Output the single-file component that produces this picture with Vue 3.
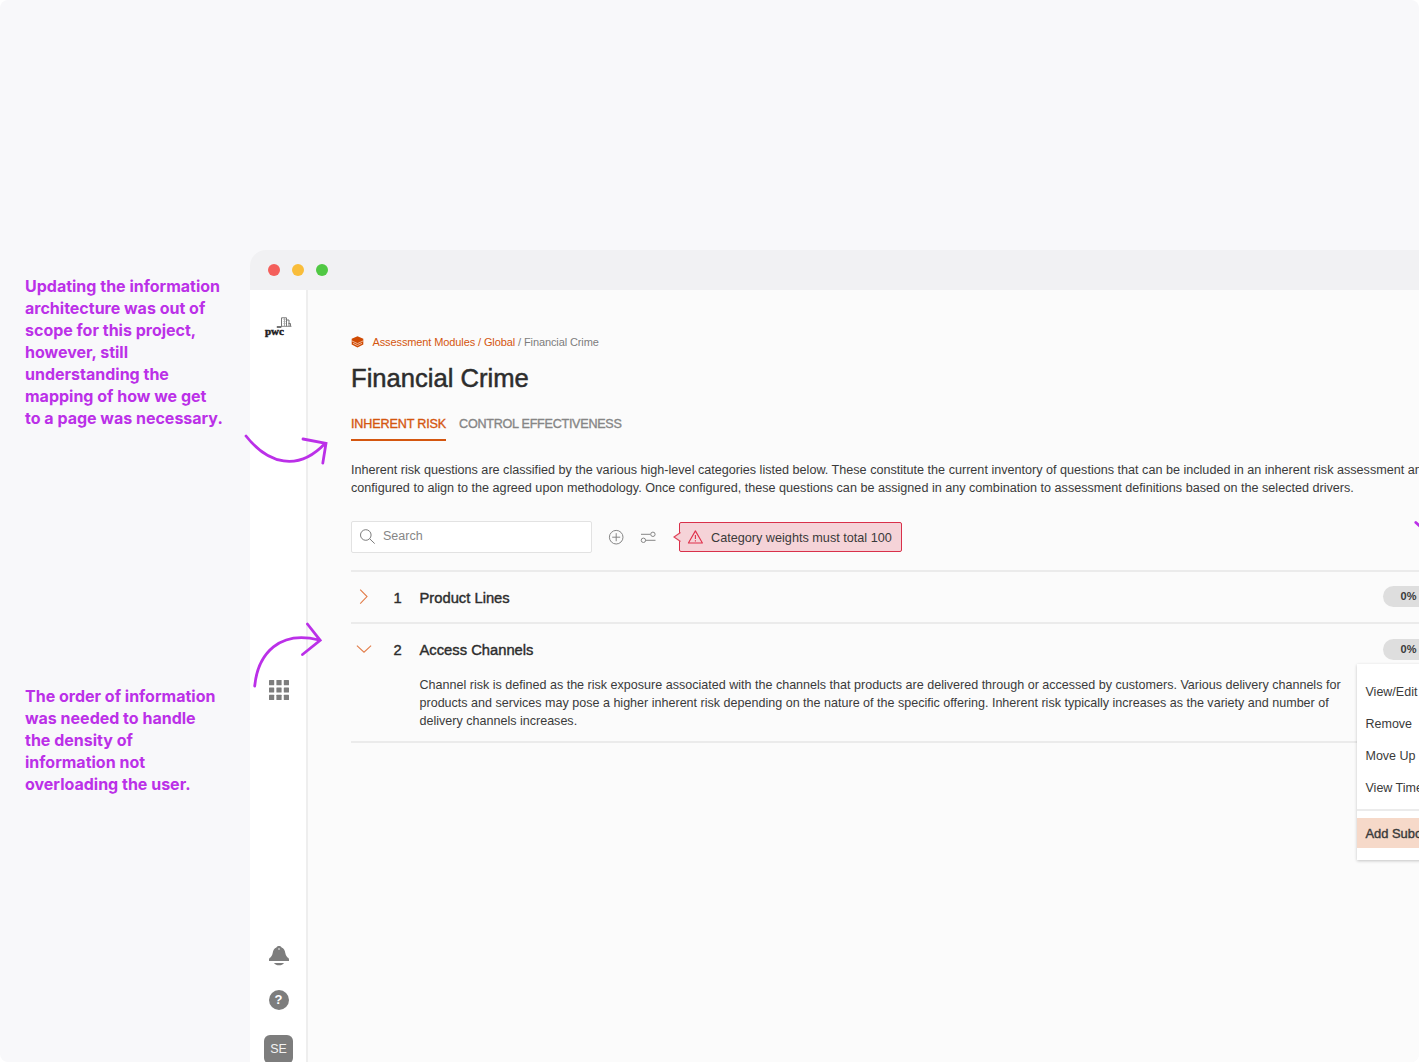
<script setup>
import { ref } from 'vue'

const notes = [
	['Updating the information', 'architecture was out of', 'scope for this project,', 'however, still', 'understanding the', 'mapping of how we get', 'to a page was necessary.'],
	['The order of information', 'was needed to handle', 'the density of', 'information not', 'overloading the user.'],
]

const tabs = ['INHERENT RISK', 'CONTROL EFFECTIVENESS']
const activeTab = ref(0)

const intro = [
	'Inherent risk questions are classified by the various high-level categories listed below. These constitute the current inventory of questions that can be included in an inherent risk assessment and',
	'configured to align to the agreed upon methodology. Once configured, these questions can be assigned in any combination to assessment definitions based on the selected drivers.',
]

const categories = ref([
	{ id: 1, name: 'Product Lines', weight: '0%', open: false, lines: [] },
	{
		id: 2,
		name: 'Access Channels',
		weight: '0%',
		open: true,
		lines: [
			'Channel risk is defined as the risk exposure associated with the channels that products are delivered through or accessed by customers. Various delivery channels for',
			'products and services may pose a higher inherent risk depending on the nature of the specific offering. Inherent risk typically increases as the variety and number of',
			'delivery channels increases.',
		],
	},
])

const menu = ['View/Edit', 'Remove', 'Move Up', 'View Timeline']
const search = ref('')
</script>

<template>
	<div class="stage">
		<aside class="notes">
			<p v-for="(note, n) in notes" :key="n" class="note">
				<span v-for="line in note" :key="line">{{ line }}</span>
			</p>
		</aside>

		<div class="window">
			<div class="titlebar">
				<i class="dot red"></i>
				<i class="dot yellow"></i>
				<i class="dot green"></i>
			</div>
			<div class="app">
				<nav class="sidebar">
					<div class="logo">
						<svg class="logo-mark" width="16" height="12" viewBox="0 0 16 12" fill="none" stroke="#777">
							<path d="M5.500 9.500V.8H10.500v8.700M10.500 3h2.500v6.500M12.500 6.500h2v3" />
							<path d="M7.500 2.500h2M7.500 4.500h2M7.500 6.500h2M8.500 1v8" stroke="#aaa" />
							<path d="M5 9.300h10.500" stroke="#888" />
							<path d="M.8 10.100h4.500" stroke="#444" stroke-width="1.500" />
						</svg>
						<span>pwc</span>
					</div>
					<svg class="grid-icon" width="20" height="20" viewBox="0 0 20 20" fill="#7d7d7d">
						<template v-for="r in 3" :key="r">
							<rect v-for="c in 3" :key="c" :x="(c - 1) * 7.4" :y="(r - 1) * 7.4" width="5.2" height="5.2" rx=".5" />
						</template>
					</svg>
					<div class="sidebar-foot">
						<svg class="bell" width="20" height="20" viewBox="0 0 20 20">
							<path d="M10 0c1.500 0 2.300.7 2.600 1.600 2.200.8 3.200 2.600 3.700 5.400.5 2.500 1.500 3.900 3.100 5.100.7.6.9 2.900.5 2.900H.1c-.4 0-.2-2.300.5-2.900 1.600-1.200 2.600-2.600 3.100-5.100.5-2.800 1.500-4.600 3.700-5.400C7.700.7 8.500 0 10 0z" fill="#7d7d7d" />
							<path d="M5 17h10c-1 1.600-2.800 2.300-5 2.300S6 18.600 5 17z" fill="#7d7d7d" />
							<circle cx="10" cy="3" r=".9" fill="#ccc" />
						</svg>
						<span class="help">?</span>
						<span class="avatar">SE</span>
					</div>
				</nav>

				<main class="content">
					<div class="crumbs">
						<svg width="13" height="12" viewBox="0 0 13 12">
							<path d="M6.500.2l5.800 2.600v5.800l-5.800 3-5.800-3V2.800z" fill="#d04a02" />
							<path d="M.7 4.800l5.800 2.800 5.800-2.800M2 7.300l4.500 2.200L11 7.300" fill="none" stroke="#f6cdb8" stroke-width=".8" />
						</svg>
						<span class="trail">Assessment Modules / Global</span>
						<span class="here">/ Financial Crime</span>
					</div>
					<h1>Financial Crime</h1>
					<div class="tabs">
						<button v-for="(tab, i) in tabs" :key="tab" :class="{ active: i === activeTab }" @click="activeTab = i">{{ tab }}</button>
					</div>
					<p class="intro">
						<span v-for="line in intro" :key="line">{{ line }}</span>
					</p>

					<div class="toolbar">
						<label class="search">
							<svg width="16" height="16" viewBox="0 0 16 16" fill="none" stroke="#7d7d7d">
								<circle cx="5.800" cy="6" r="5.300" />
								<path d="M9.700 9.800l5 4.800" />
							</svg>
							<input v-model="search" type="text" placeholder="Search">
						</label>
						<svg class="add" width="16" height="16" viewBox="0 0 16 16" fill="none" stroke="#868686">
							<circle cx="8.200" cy="8.200" r="6.800" />
							<path d="M8.200 4.200v8M4.200 8.200h8" />
						</svg>
						<svg class="filter" width="16" height="12" viewBox="0 0 16 12" fill="none" stroke="#868686">
							<path d="M1 3.300h9.300M5.500 9.300H15.500" />
							<circle cx="12.900" cy="3.300" r="2.200" />
							<circle cx="3.400" cy="9.300" r="2.200" />
						</svg>
						<div class="alert">
							<svg class="alert-tip" width="8" height="10" viewBox="0 0 8 10">
								<path d="M7.500.5L1 5l6.500 4.500" fill="#f5d3d8" stroke="#e0455a" stroke-width="1.200" />
							</svg>
							<svg width="16" height="14" viewBox="0 0 16 14" fill="none" stroke="#e0304a" stroke-width="1.100" stroke-linejoin="round">
								<path d="M8.400 .9L15.400 13H1.400z" />
								<path d="M8.400 5v4M8.400 10.200v1.300" />
							</svg>
							<span>Category weights must total 100</span>
						</div>
					</div>

					<section class="list">
						<article v-for="cat in categories" :key="cat.id" class="row" :class="{ open: cat.open }">
							<header @click="cat.open = !cat.open">
								<svg class="chevron" width="16" height="16" viewBox="0 0 16 16" fill="none" stroke="#e27c48" stroke-width="1.100">
									<path v-if="cat.open" d="M.900 3.700L8 10.200l7.100-6.500" />
									<path v-else d="M4.200.6L11 7.600l-6.800 7" />
								</svg>
								<span class="num">{{ cat.id }}</span>
								<span class="name">{{ cat.name }}</span>
								<span class="pill">{{ cat.weight }}</span>
							</header>
							<p v-if="cat.open" class="detail">
								<span v-for="line in cat.lines" :key="line">{{ line }}</span>
							</p>
						</article>
						<div class="menu">
							<a v-for="item in menu" :key="item">{{ item }}</a>
							<hr>
							<a class="hot">Add Subcategory</a>
						</div>
					</section>
				</main>
			</div>
		</div>

		<svg class="arrows" width="1419" height="1062" viewBox="0 0 1419 1062" fill="none" stroke="#bb30e8" stroke-width="2.800" stroke-linecap="round">
			<path d="M246 436C268 464 298 472 325 443.500M303 439l23 4.300-3.200 19.800" />
			<path d="M254.700 686C258 653 280 630 319 640M307.400 624l12.800 16.300-17.700 14.200" />
			<path d="M1415.800 522.500l8 7" />
		</svg>
	</div>
</template>

<style>
body {
	margin: 0;
	background: #fff;
	overflow: hidden;
}
</style>

<style scoped>
.stage {
	position: relative;
	display: flex;
	width: 1419px;
	height: 1062px;
	overflow: hidden;
	background: #f8f8fa;
	border-radius: 8px;
	font-family: "Liberation Sans", Arial, sans-serif;
	font-size: 12.4px;
	color: #3a3a3a;
	white-space: nowrap;
}

.arrows {
	position: absolute;
	top: 0;
	left: 0;
	pointer-events: none;
}

.notes {
	flex: none;
	width: 225px;
	box-sizing: border-box;
	padding: 275px 0 0 25px;
	font: 700 16px/22px Inter, sans-serif;
	color: #bb30e8;
}
.note {
	margin: 0 0 256px;
}
.note span,
.intro span,
.detail span {
	display: block;
}

.window {
	flex: none;
	display: flex;
	flex-direction: column;
	width: 1440px;
	margin: 250px 0 0 25px;
	border-radius: 16px 16px 0 0;
	overflow: hidden;
}
.titlebar {
	flex: none;
	display: flex;
	align-items: center;
	gap: 12px;
	height: 40px;
	padding-left: 18px;
	background: #f1f1f3;
}
.dot {
	width: 12px;
	height: 12px;
	border-radius: 50%;
}
.red { background: #f45f5b; }
.yellow { background: #f9bd3a; }
.green { background: #50c843; }

.app {
	flex: 1;
	display: flex;
	background: #fbfbfb;
}
.sidebar {
	flex: none;
	display: flex;
	flex-direction: column;
	align-items: center;
	width: 56px;
	background: #fff;
	border-right: 2px solid #eee;
}
.logo {
	display: flex;
	flex-direction: column;
	width: 28px;
	margin-top: 27px;
	font: 700 11px/11px "Liberation Serif", serif;
	color: #222;
	-webkit-text-stroke: .5px #222;
}
.logo-mark {
	margin-left: 12px;
}
.logo span {
	margin: -3px 0 0 1px;
}
.grid-icon {
	margin: 343px 0 0 1px;
}
.sidebar-foot {
	display: flex;
	flex-direction: column;
	align-items: center;
	margin: 246px 0 0 1px;
}
.help {
	width: 20px;
	height: 20px;
	margin-top: 24px;
	border-radius: 50%;
	background: #7d7d7d;
	color: #fff;
	font-size: 13px;
	font-weight: 700;
	line-height: 20px;
	text-align: center;
}
.avatar {
	width: 29px;
	height: 29px;
	margin-top: 25px;
	border-radius: 6px;
	background: #7d7d7d;
	color: #f2f2f2;
	font-size: 12.5px;
	line-height: 29px;
	text-align: center;
}

.content {
	flex: 1;
	display: flex;
	flex-direction: column;
	padding: 45px 0 0 43px;
}
.crumbs {
	display: flex;
	align-items: center;
	height: 14px;
	font-size: 11px;
	letter-spacing: -.11px;
}
.trail {
	margin-left: 8.5px;
	color: #d4560f;
}
.here {
	margin-left: 3px;
	color: #7d7d7d;
}
h1 {
	margin: 13px 0 0;
	font-size: 25.6px;
	font-weight: 400;
	line-height: 32px;
	color: #2d2d2d;
	-webkit-text-stroke: .5px #2d2d2d;
}
.tabs {
	display: flex;
	gap: 13px;
	height: 28px;
	margin-top: 19px;
}
.tabs button {
	display: flex;
	padding: 4px 0 0;
	border: 0;
	border-bottom: 2px solid transparent;
	background: none;
	font: 400 12.6px/14px "Liberation Sans", Arial, sans-serif;
	letter-spacing: -.27px;
	color: #868686;
	-webkit-text-stroke: .35px;
}
.tabs .active {
	letter-spacing: -.15px;
	border-color: #d4560f;
	color: #d4560f;
}
.intro {
	margin: 20px 0 0;
	font-size: 12.61px;
	line-height: 18px;
}

.toolbar {
	display: flex;
	align-items: center;
	height: 32px;
	margin-top: 24px;
}
.search {
	display: flex;
	align-items: center;
	width: 241px;
	height: 32px;
	box-sizing: border-box;
	padding-left: 8px;
	background: #fff;
	border: 1px solid #e2e2e2;
	border-radius: 2px;
}
.search input {
	width: 180px;
	margin-left: 7px;
	padding: 0 0 2px;
	border: 0;
	outline: 0;
	background: none;
	font: 12.5px "Liberation Sans", Arial, sans-serif;
}
.search input::placeholder {
	color: #868686;
}
.add {
	margin-left: 16px;
}
.filter {
	margin-left: 16px;
}
.alert {
	position: relative;
	display: flex;
	align-items: center;
	width: 223px;
	height: 30px;
	box-sizing: border-box;
	margin-left: 23px;
	padding-left: 7px;
	background: #f5d3d8;
	border: 1px solid #d9304a;
	border-radius: 2px;
	font-size: 12.67px;
}
.alert-tip {
	position: absolute;
	left: -7px;
	top: 9px;
}
.alert span {
	margin: 2px 0 0 8px;
}

.list {
	position: relative;
	margin-top: 17px;
	border-top: 2px solid #ebebeb;
}
.row {
	height: 50px;
	border-bottom: 2px solid #ebebeb;
}
.row.open {
	height: 116.5px;
}
.row header {
	display: flex;
	align-items: center;
	height: 50px;
	cursor: pointer;
}
.row.open header {
	height: 51px;
}
.chevron {
	margin-left: 5px;
}
.num,
.name {
	font-size: 14.75px;
	color: #2d2d2d;
	-webkit-text-stroke: .4px #2d2d2d;
}
.num {
	width: 26px;
	margin-left: 21.5px;
	padding-top: 1px;
}
.name {
	width: 963px;
	padding-top: 1px;
}
.pill {
	width: 52px;
	height: 21px;
	margin-top: -1px;
	border-radius: 11px;
	background: #dedede;
	font-size: 11px;
	font-weight: 700;
	line-height: 21px;
	text-align: center;
}
.detail {
	margin: 1px 0 0 68.5px;
	font-size: 12.55px;
	line-height: 18px;
}

.menu {
	position: absolute;
	top: 92px;
	left: 1005.5px;
	width: 160px;
	height: 196px;
	box-sizing: border-box;
	padding-top: 12px;
	background: #fff;
	box-shadow: 0 1px 3px rgba(0, 0, 0, .22);
}
.menu a {
	display: block;
	height: 32px;
	padding-left: 9px;
	font-size: 12.5px;
	line-height: 32px;
}
.menu hr {
	height: 2px;
	margin: 5px 0 7px;
	border: 0;
	background: #ebebeb;
}
.menu .hot {
	height: 30px;
	font-size: 12.9px;
	line-height: 32px;
	background: #f6d9c9;
	-webkit-text-stroke: .4px #3a3a3a;
}
</style>
